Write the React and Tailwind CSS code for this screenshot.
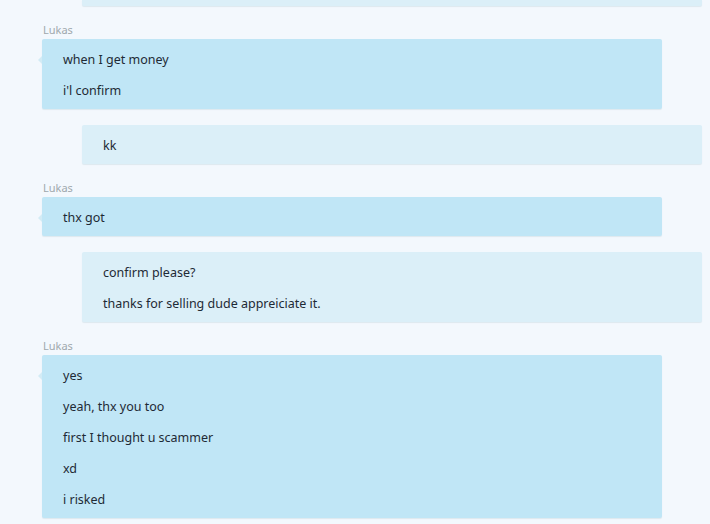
const messages = [
  { from: 'them', lines: ['when I get money', "i'l confirm"] },
  { from: 'me', lines: ['kk'] },
  { from: 'them', lines: ['thx got'] },
  { from: 'me', lines: ['confirm please?', 'thanks for selling dude appreiciate it.'] },
  { from: 'them', lines: ['yes', 'yeah, thx you too', 'first I thought u scammer', 'xd', 'i risked'] },
];

function Bubble({ msg }) {
  const mine = msg.from === 'me';
  return (
    <div className="flex flex-col">
      {!mine && (
        <div className="ml-[43px] h-[17px] leading-[16px] text-[11px] text-[#9fa8ad]">Lukas</div>
      )}
      <div
        className={`relative w-[620px] py-1 rounded-[2px] shadow-[0_1px_1px_rgba(120,160,180,0.18)]
          ${mine ? 'ml-[82px] bg-[#dbeff8]' : 'ml-[42px] bg-[#c0e6f6]'}`}
      >
        {!mine && (
          <div className="absolute left-[-4px] top-[17px] w-0 h-0 border-y-[4px] border-y-transparent border-r-[4px] border-r-[#d3ebf5]" />
        )}
        {msg.lines.map((line, i) => (
          <div key={i} className="h-[31px] flex items-center pt-[3px] pl-[21px] text-[12.5px] text-[#1e2a35]">
            {line}
          </div>
        ))}
      </div>
    </div>
  );
}

export default function App() {
  return (
    <div
      className="w-[710px] h-[524px] overflow-hidden bg-[#f3f8fd] flex flex-col gap-4"
      style={{ fontFamily: '"Noto Sans", "Open Sans", sans-serif' }}
    >
      <div className="ml-[82px] w-[620px] h-[6px] bg-[#dbeff8] rounded-b-[2px] shadow-[0_1px_1px_rgba(120,160,180,0.18)] shrink-0" />
      {messages.map((m, i) => (
        <Bubble key={i} msg={m} />
      ))}
    </div>
  );
}
